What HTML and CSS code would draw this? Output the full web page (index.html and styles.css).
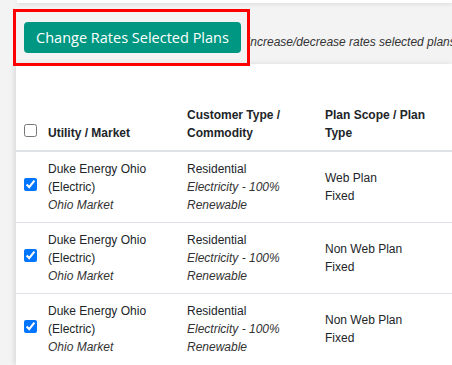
FILE: index.html
```html
<!DOCTYPE html>
<html>
<head>
<meta charset="utf-8">
<link rel="stylesheet" href="styles.css">
</head>
<body>
<div class="page">
  <div class="topcard"></div>
  <div class="toolbar">
    <button class="btn">Change Rates Selected Plans</button>
    <span class="hint">Increase/decrease rates selected plans</span>
  </div>
  <div class="highlight"></div>
  <div class="card">
    <table class="plans">
      <colgroup>
        <col class="c-check"><col class="c-util"><col class="c-cust"><col class="c-scope"><col class="c-more">
      </colgroup>
      <thead>
        <tr>
          <th class="check"><input type="checkbox"></th>
          <th>Utility / Market</th>
          <th>Customer Type / Commodity</th>
          <th>Plan Scope / Plan Type</th>
          <th></th>
        </tr>
      </thead>
      <tbody>
        <tr>
          <td class="check"><input type="checkbox" checked></td>
          <td>Duke Energy Ohio (Electric)<br><em>Ohio Market</em></td>
          <td>Residential<br><em>Electricity - 100% Renewable</em></td>
          <td>Web Plan<br>Fixed</td>
          <td></td>
        </tr>
        <tr>
          <td class="check"><input type="checkbox" checked></td>
          <td>Duke Energy Ohio (Electric)<br><em>Ohio Market</em></td>
          <td>Residential<br><em>Electricity - 100% Renewable</em></td>
          <td>Non Web Plan<br>Fixed</td>
          <td></td>
        </tr>
        <tr>
          <td class="check"><input type="checkbox" checked></td>
          <td>Duke Energy Ohio (Electric)<br><em>Ohio Market</em></td>
          <td>Residential<br><em>Electricity - 100% Renewable</em></td>
          <td>Non Web Plan<br>Fixed</td>
          <td></td>
        </tr>
      </tbody>
    </table>
  </div>
</div>
</body>
</html>
```
FILE: styles.css
```css
html, body {
  margin: 0;
  padding: 0;
  background: #f3f3f3;
  height: 100%;
  overflow: hidden;
}
.page {
  position: relative;
  height: 365px;
}
.topcard {
  height: 3px;
  margin-left: 17px;
  background: #fff;
  box-shadow: 0 1px 4px rgba(0, 0, 0, 0.12);
}
.toolbar {
  display: flex;
  align-items: flex-start;
  padding: 19px 0 11px 24px;
  white-space: nowrap;
  overflow: hidden;
}
.btn {
  height: 31px;
  width: 217px;
  padding: 0;
  border: none;
  border-radius: 4px;
  background: #009782;
  color: #fff;
  font-family: "Open Sans", sans-serif;
  font-size: 14.5px;
  font-weight: 500;
  flex: none;
}
.hint {
  margin: 11px 0 0 6px;
  font-family: "Liberation Sans", Arial, sans-serif;
  font-style: italic;
  font-size: 12px;
  line-height: 18px;
  color: #333;
}
.highlight {
  position: absolute;
  left: 13px;
  top: 9px;
  width: 237px;
  height: 57px;
  box-sizing: border-box;
  border: 3px solid #ff0000;
}
.card {
  margin-left: 16px;
  background: #fff;
  box-shadow: -2px 0 5px rgba(0, 0, 0, 0.1);
  height: 301px;
  overflow: hidden;
}
.plans {
  border-collapse: collapse;
  table-layout: fixed;
  width: 600px;
  font-family: "Liberation Sans", Arial, sans-serif;
  font-size: 12px;
  line-height: 18px;
  color: #212529;
}
.c-check { width: 24px; }
.c-util { width: 139px; }
.c-cust { width: 138px; }
.c-scope { width: 132px; }
.plans th {
  text-align: left;
  font-weight: bold;
  vertical-align: bottom;
  padding: 42px 8px 8px 8px;
  border-bottom: 2px solid #dee2e6;
}
.plans td {
  vertical-align: middle;
  padding: 8px;
  border-top: 1px solid #dee2e6;
}
.plans .check {
  padding-right: 0;
}
.plans input {
  margin: 0;
  width: 13px;
  height: 13px;
}
.plans em {
  font-style: italic;
  color: #333;
}
```
